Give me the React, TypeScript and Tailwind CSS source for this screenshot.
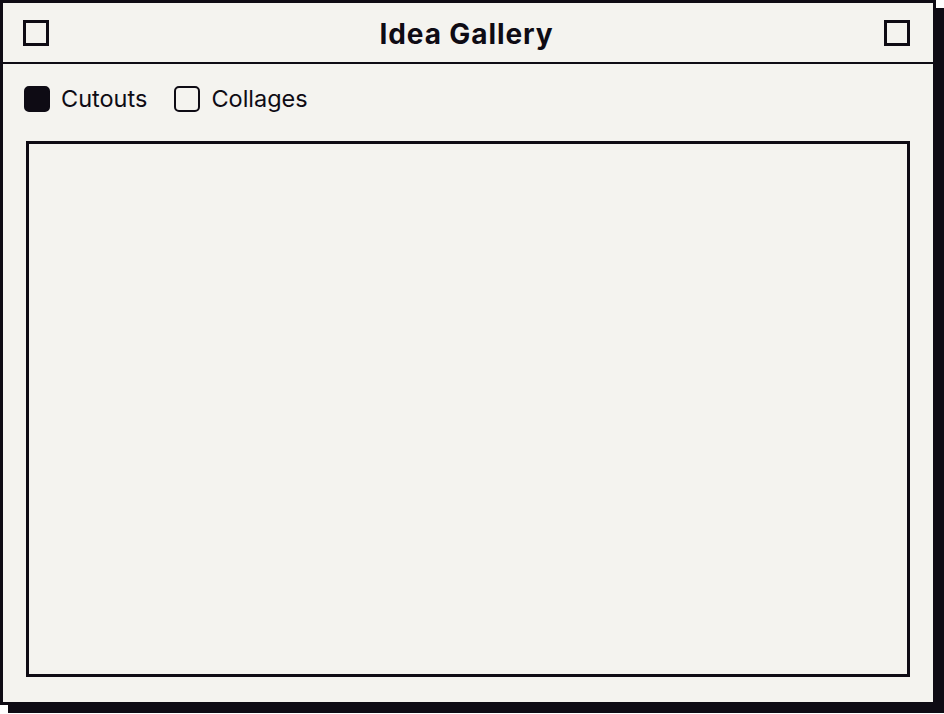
import React from "react";

export default function App() {
  return (
    <div className="w-[944px] h-[714px] bg-white relative" style={{ fontFamily: "Inter, 'Noto Sans', sans-serif" }}>
      <div className="w-[936px] h-[705px] bg-[#f4f3ef] border-[3px] border-[#0e0b14] shadow-[8px_8px_0_0_#0e0b14] flex flex-col">
        <div className="h-[61px] shrink-0 border-b-[2px] border-[#0e0b14] flex items-center justify-between pl-[20px] pr-[23px]">
          <div className="w-[26px] h-[26px] border-[3px] border-[#0e0b14]" />
          <div className="text-[28px] leading-none font-bold text-[#0e0b14] tracking-[0.9px] pt-[2px]">Idea Gallery</div>
          <div className="w-[26px] h-[26px] border-[3px] border-[#0e0b14]" />
        </div>
        <div className="flex items-center gap-[27px] pl-[21px] pt-[22px] h-[47px] shrink-0">
          <label className="flex items-center gap-[11px]">
            <div className="w-[26px] h-[26px] rounded-[5px] bg-[#0e0b14] border-2 border-[#0e0b14]" />
            <span className="text-[23.5px] leading-none text-[#0e0b14]">Cutouts</span>
          </label>
          <label className="flex items-center gap-[11px]">
            <div className="w-[26px] h-[26px] rounded-[5px] border-2 border-[#0e0b14]" />
            <span className="text-[23.5px] leading-none text-[#0e0b14]">Collages</span>
          </label>
        </div>
        <div className="flex-1 px-[23px] pt-[30px] pb-[25px] flex">
          <div className="flex-1 border-[3px] border-[#0e0b14]" />
        </div>
      </div>
    </div>
  );
}
